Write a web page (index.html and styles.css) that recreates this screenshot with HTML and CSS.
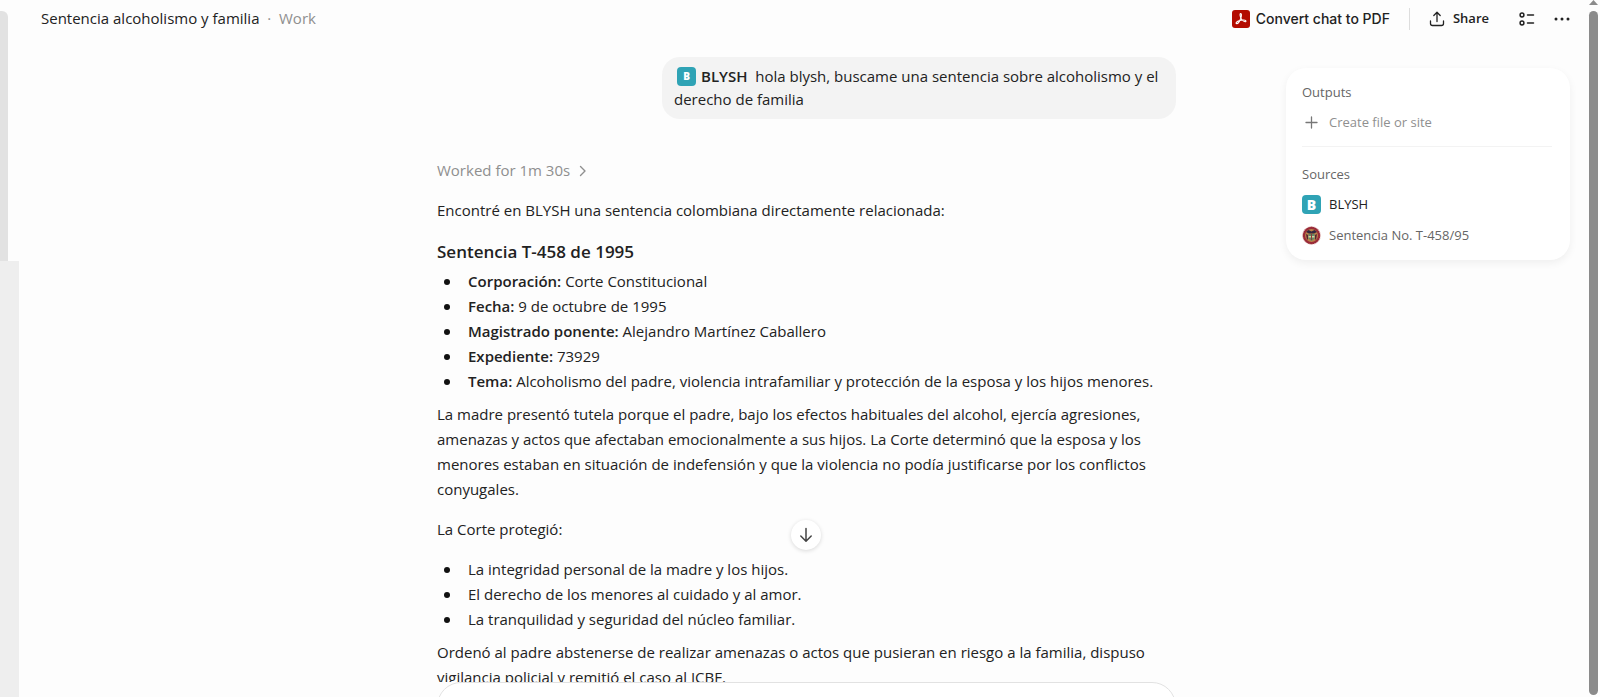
FILE: index.html
```html
<!DOCTYPE html>
<html lang="es">

<head>
    <meta charset="utf-8">
    <title>Sentencia alcoholismo y familia</title>
    <link rel="stylesheet" href="styles.css">
</head>

<body>
    <div class="app">
        <!-- sidebar edge -->
        <div class="rail">
            <div class="rail_top">
                <div class="rail_thumb"></div>
            </div>
        </div>

        <div class="main">
            <header class="topbar">
                <h1 class="title">Sentencia alcoholismo y familia <span class="muted">&nbsp;·&nbsp; Work</span></h1>
                <div class="actions">
                    <button class="btn pdf_btn">
                        <svg width="18" height="18" viewBox="0 0 18 18">
                            <rect width="18" height="18" rx="3" fill="#b30b00" />
                            <path d="M8.600 3.600c1.200 0 .9 2.600.2 4.600-.8 2.300-2.600 5.400-4 5.400-1.600 0-.5-2.300 3-3.100 2.600-.6 6.200-.7 6.200.5 0 1.300-2.600.6-4-1C8.400 8.300 7.400 3.600 8.600 3.600z" fill="none" stroke="#fff" stroke-width="1.100" />
                        </svg>
                        Convert chat to PDF
                    </button>
                    <span class="divider"></span>
                    <button class="btn share_btn">
                        <svg width="16" height="16" viewBox="0 0 16 16" fill="none" stroke="#222" stroke-width="1.300" stroke-linecap="round" stroke-linejoin="round">
                            <path d="M8 10.500V1.500M4.800 4.500L8 1.300l3.200 3.200M1.500 10v2.500a2 2 0 0 0 2 2h9a2 2 0 0 0 2-2V10" />
                        </svg>
                        Share
                    </button>
                    <button class="btn" aria-label="Detalles">
                        <svg width="16" height="14" viewBox="0 0 16 14" fill="none" stroke="#222" stroke-width="1.500" stroke-linecap="round">
                            <circle cx="3" cy="3" r="1.900" />
                            <circle cx="3" cy="11" r="1.900" />
                            <path d="M8.500 3h6M8.500 11h6" />
                        </svg>
                    </button>
                    <button class="btn" aria-label="Más opciones">
                        <svg width="16" height="4" viewBox="0 0 16 4" fill="#222">
                            <circle cx="2" cy="2" r="1.500" />
                            <circle cx="8" cy="2" r="1.500" />
                            <circle cx="14" cy="2" r="1.500" />
                        </svg>
                    </button>
                </div>
            </header>

            <main class="chat">
                <div class="thread">
                    <p class="bubble"><span class="logo logo_small">B</span><b>BLYSH</b>&nbsp; hola blysh, buscame una sentencia sobre alcoholismo y el derecho de familia</p>

                    <button class="worked">Worked for 1m 30s
                        <svg width="8" height="12" viewBox="0 0 8 12" fill="none" stroke="#8f8f8f" stroke-width="1.400" stroke-linecap="round" stroke-linejoin="round">
                            <path d="M1.500 1.500L6 6l-4.500 4.500" />
                        </svg>
                    </button>

                    <p>Encontré en BLYSH una sentencia colombiana directamente relacionada:</p>
                    <h2>Sentencia T-458 de 1995</h2>
                    <ul>
                        <li><b>Corporación:</b> Corte Constitucional</li>
                        <li><b>Fecha:</b> 9 de octubre de 1995</li>
                        <li><b>Magistrado ponente:</b> Alejandro Martínez Caballero</li>
                        <li><b>Expediente:</b> 73929</li>
                        <li><b>Tema:</b> Alcoholismo del padre, violencia intrafamiliar y protección de la esposa y los hijos menores.</li>
                    </ul>
                    <p>La madre presentó tutela porque el padre, bajo los efectos habituales del alcohol, ejercía agresiones, amenazas y actos que afectaban emocionalmente a sus hijos. La Corte determinó que la esposa y los menores estaban en situación de indefensión y que la violencia no podía justificarse por los conflictos conyugales.</p>
                    <p>La Corte protegió:</p>
                    <ul>
                        <li>La integridad personal de la madre y los hijos.</li>
                        <li>El derecho de los menores al cuidado y al amor.</li>
                        <li>La tranquilidad y seguridad del núcleo familiar.</li>
                    </ul>
                    <p>Ordenó al padre abstenerse de realizar amenazas o actos que pusieran en riesgo a la familia, dispuso vigilancia policial y remitió el caso al ICBF.</p>
                </div>
            </main>

            <form class="composer">
                <button type="button" class="scroll_btn" aria-label="Ir al final">
                    <svg width="14" height="16" viewBox="0 0 14 16" fill="none" stroke="#444" stroke-width="1.500" stroke-linecap="round" stroke-linejoin="round">
                        <path d="M7 1.500v12.500M1.800 9L7 14.200 12.200 9" />
                    </svg>
                </button>
                <div class="composer_clip">
                    <textarea class="composer_input" aria-label="Mensaje"></textarea>
                </div>
            </form>

            <!-- floating panel -->
            <aside class="panel">
                <h3>Outputs</h3>
                <button class="row create">
                    <svg width="19" height="19" viewBox="0 0 19 19" fill="none" stroke="#777" stroke-width="1.300" stroke-linecap="round">
                        <path d="M9.500 4v11M4 9.500h11" />
                    </svg>
                    Create file or site
                </button>
                <hr>
                <h3>Sources</h3>
                <a class="row source" href="#"><span class="logo">B</span>BLYSH</a>
                <a class="row" href="#">
                    <svg width="19" height="19" viewBox="0 0 19 19">
                        <circle cx="9.500" cy="9.500" r="9" fill="#9a2b38" />
                        <circle cx="9.500" cy="9.500" r="9" fill="none" stroke="#ecd0cc" stroke-width="1" stroke-dasharray="1.500 1" />
                        <circle cx="9.500" cy="9.500" r="6.500" fill="#b9824a" />
                        <path d="M4 6l2.500-2 3 1.500 3-1.500L15 6l-3 1.500H7z" fill="#33263f" />
                        <path d="M4 8l2 1v4l-1 1zM15 8l-2 1v4l1 1z" fill="#5a2433" />
                        <path d="M6.500 8h6v4.500l-3 2.500-3-2.500z" fill="#5f8a68" />
                        <path d="M6.500 10h6v1.500h-6z" fill="#d8d0a0" />
                        <path d="M9 8h1v6H9z" fill="#8f3b35" />
                    </svg>
                    Sentencia No. T-458/95
                </a>
            </aside>
        </div>

        <!-- page scrollbar -->
        <div class="scrollbar">
            <div class="arrow"></div>
            <div class="thumb"></div>
        </div>
    </div>
</body>

</html>
```
FILE: styles.css
```css
* {
    box-sizing: border-box;
}

body {
    margin: 0;
    background-color: #fdfdfd;
    color: #222;
    font-family: "Open Sans", "Noto Sans", sans-serif;
    font-size: 15px;
    line-height: 25px;
}

button {
    border: 0;
    padding: 0;
    background: none;
    color: inherit;
    font: inherit;
    cursor: pointer;
}

a {
    color: inherit;
    text-decoration: none;
}

b {
    font-weight: 600;
}

.app {
    display: flex;
    height: 100vh;
    overflow: hidden;
}

/* left edge */
.rail {
    width: 19px;
    background-color: #eee;
}

.rail_top {
    height: 261px;
    padding-top: 11px;
    background-color: #fdfdfd;
}

.rail_thumb {
    width: 8px;
    height: 250px;
    border-top-right-radius: 6px;
    background-color: #e2e2e2;
}

.main {
    position: relative;
    flex: 1;
    min-width: 0;
    display: flex;
    flex-direction: column;
}

/* top bar */
.topbar {
    display: flex;
    justify-content: space-between;
    align-items: center;
    height: 37px;
    padding: 0 19px 0 22px;
}

.title {
    margin: 0;
    font-size: 15px;
    font-weight: 400;
}

.muted {
    color: #8f8f8f;
}

.actions {
    display: flex;
    align-items: center;
    gap: 19px;
}

.btn {
    display: flex;
    align-items: center;
    gap: 6px;
}

.pdf_btn {
    font-family: Inter, sans-serif;
    font-size: 14px;
    font-weight: 500;
}

.share_btn {
    gap: 8px;
    margin-right: 11px;
    font-size: 13px;
    font-weight: 600;
}

.divider {
    width: 1px;
    height: 22px;
    background-color: #ddd;
}

/* conversation */
.chat {
    flex: 1;
    min-height: 0;
    overflow: hidden;
    padding: 20px 0 0 5px;
}

.thread {
    display: flex;
    flex-direction: column;
    align-items: flex-start;
    max-width: 739px;
    margin: 0 auto;
}

.thread p {
    margin: 0 0 15px;
}

.thread .bubble {
    align-self: flex-end;
    max-width: 514px;
    margin-bottom: 39px;
    padding: 8px 12px;
    border-radius: 18px;
    background-color: #f3f3f3;
    line-height: 23px;
}

.worked {
    display: flex;
    align-items: center;
    gap: 9px;
    margin-bottom: 15px;
    color: #8f8f8f;
}

.thread h2 {
    margin: 1px 0 5px;
    font-size: 17px;
    font-weight: 600;
}

.thread ul {
    margin: 0 0 8px;
    padding-left: 31px;
    list-style: none;
}

.thread li::before {
    content: "";
    display: inline-block;
    width: 6px;
    height: 6px;
    margin: 0 18px 0 -24px;
    border-radius: 50%;
    background-color: #111;
    vertical-align: 2px;
}

.logo {
    display: inline-flex;
    justify-content: center;
    align-items: center;
    width: 19px;
    height: 19px;
    border-radius: 4px;
    background-color: #2fa3b5;
    color: #fff;
    font-size: 14px;
    font-weight: 800;
    line-height: 19px;
}

.logo_small {
    margin: 0 5px 0 3px;
    font-size: 10px;
    vertical-align: text-bottom;
}

/* message box */
.composer {
    position: relative;
    margin: 0;
    padding-left: 5px;
}

.composer_clip {
    max-width: 739px;
    height: 15px;
    margin: 0 auto;
    overflow: hidden;
}

.composer_input {
    display: block;
    width: 100%;
    height: 56px;
    border: 1px solid #e2e2e2;
    border-radius: 24px;
    background-color: #fff;
    resize: none;
}

.scroll_btn {
    position: absolute;
    left: 50%;
    bottom: 147px;
    display: flex;
    justify-content: center;
    align-items: center;
    width: 30px;
    height: 30px;
    margin-left: -13px;
    border-radius: 50%;
    background-color: #fff;
    box-shadow: 0 1px 4px rgba(0, 0, 0, 0.15);
}

/* floating panel */
.panel {
    position: absolute;
    top: 68px;
    right: 19px;
    width: 284px;
    padding: 12px 18px 12px 16px;
    border-radius: 20px;
    background-color: #fff;
    box-shadow: 0 3px 8px rgba(0, 0, 0, 0.06);
    color: #666;
    font-size: 13px;
}

.panel h3 {
    margin: 0 0 6px;
    font-size: 13px;
    font-weight: 400;
    line-height: 24px;
}

.panel hr {
    margin: 11px 0 15px;
    border: 0;
    border-top: 1px solid #f3f3f3;
}

.row {
    display: flex;
    align-items: center;
    gap: 8px;
    height: 25px;
}

.create {
    color: #8f8f8f;
}

.source {
    margin-bottom: 6px;
    color: #222;
}

/* right scrollbar */
.scrollbar {
    display: flex;
    flex-direction: column;
    width: 11px;
    padding: 0 2px 2px 0;
}

.arrow {
    height: 5px;
    margin-bottom: 6px;
    background-color: #8b8b8b;
    clip-path: polygon(50% 0, 100% 100%, 0 100%);
}

.thumb {
    flex: 1;
    border-radius: 5px;
    background-color: #8b8b8b;
}
```
